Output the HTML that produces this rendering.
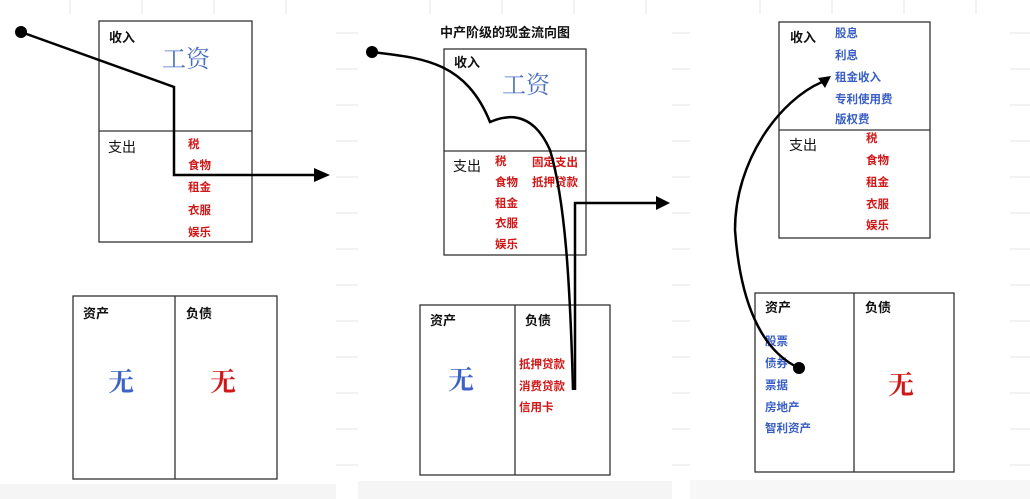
<!DOCTYPE html>
<html><head><meta charset="utf-8"><style>
html,body{margin:0;padding:0;background:#fff;}
body{width:1030px;height:499px;position:relative;overflow:hidden;font-family:"Liberation Sans","Noto Sans CJK SC",sans-serif;}
svg{position:absolute;left:0;top:0;}
</style></head><body>
<svg width="1030" height="499" viewBox="0 0 1030 499" font-family="'Noto Sans CJK SC','WenQuanYi Zen Hei',sans-serif">
<g stroke="#e4e4e4" stroke-width="1">
<line x1="70" y1="0" x2="70" y2="14"/><line x1="142" y1="0" x2="142" y2="14"/><line x1="214" y1="0" x2="214" y2="14"/><line x1="286" y1="0" x2="286" y2="14"/>
<line x1="430" y1="0" x2="430" y2="14"/><line x1="502" y1="0" x2="502" y2="14"/><line x1="574" y1="0" x2="574" y2="14"/><line x1="646" y1="0" x2="646" y2="14"/>
<line x1="760" y1="0" x2="760" y2="14"/><line x1="832" y1="0" x2="832" y2="14"/><line x1="904" y1="0" x2="904" y2="14"/><line x1="976" y1="0" x2="976" y2="14"/>
</g>
<g stroke="#e6e6e6">
<line x1="336" y1="33" x2="358" y2="33"/><line x1="336" y1="69" x2="358" y2="69"/><line x1="336" y1="105" x2="358" y2="105"/><line x1="336" y1="141" x2="358" y2="141"/><line x1="336" y1="177" x2="358" y2="177"/><line x1="336" y1="213" x2="358" y2="213"/><line x1="336" y1="249" x2="358" y2="249"/><line x1="336" y1="285" x2="358" y2="285"/><line x1="336" y1="321" x2="358" y2="321"/><line x1="336" y1="357" x2="358" y2="357"/><line x1="336" y1="393" x2="358" y2="393"/><line x1="336" y1="429" x2="358" y2="429"/><line x1="336" y1="465" x2="358" y2="465"/>
<line x1="672" y1="33" x2="690" y2="33"/><line x1="672" y1="69" x2="690" y2="69"/><line x1="672" y1="105" x2="690" y2="105"/><line x1="672" y1="141" x2="690" y2="141"/><line x1="672" y1="177" x2="690" y2="177"/><line x1="672" y1="213" x2="690" y2="213"/><line x1="672" y1="249" x2="690" y2="249"/><line x1="672" y1="285" x2="690" y2="285"/><line x1="672" y1="321" x2="690" y2="321"/><line x1="672" y1="357" x2="690" y2="357"/><line x1="672" y1="393" x2="690" y2="393"/><line x1="672" y1="429" x2="690" y2="429"/><line x1="672" y1="465" x2="690" y2="465"/>
<line x1="1010" y1="33" x2="1030" y2="33"/><line x1="1010" y1="69" x2="1030" y2="69"/><line x1="1010" y1="105" x2="1030" y2="105"/><line x1="1010" y1="141" x2="1030" y2="141"/><line x1="1010" y1="177" x2="1030" y2="177"/><line x1="1010" y1="213" x2="1030" y2="213"/><line x1="1010" y1="249" x2="1030" y2="249"/><line x1="1010" y1="285" x2="1030" y2="285"/><line x1="1010" y1="321" x2="1030" y2="321"/><line x1="1010" y1="357" x2="1030" y2="357"/><line x1="1010" y1="393" x2="1030" y2="393"/><line x1="1010" y1="429" x2="1030" y2="429"/><line x1="1010" y1="465" x2="1030" y2="465"/>
</g>
<rect x="0" y="484" width="336" height="15" fill="#f5f5f5"/>
<rect x="358" y="481" width="314" height="18" fill="#f5f5f5"/>
<rect x="690" y="480" width="340" height="19" fill="#f7f7f7"/>

<g fill="none" stroke="#333" stroke-width="1.3">
<rect x="99" y="21" width="153" height="221"/><line x1="99" y1="131" x2="252" y2="131"/>
<rect x="73" y="296" width="204" height="183"/><line x1="175" y1="296" x2="175" y2="479"/>
<rect x="444" y="49" width="142" height="206"/><line x1="444" y1="151" x2="586" y2="151"/>
<rect x="420" y="305" width="190" height="170"/><line x1="515" y1="305" x2="515" y2="475"/>
<rect x="779" y="22" width="151" height="216"/><line x1="779" y1="130" x2="930" y2="130"/>
<rect x="755" y="293" width="199" height="179"/><line x1="854" y1="293" x2="854" y2="472"/>
</g>

<g font-size="13" font-weight="bold" fill="#111">
<text x="109" y="42">收入</text><text x="108" y="152" font-weight="normal" font-size="14">支出</text>
<text x="83" y="318">资产</text><text x="186" y="318">负债</text>
<text x="440" y="37">中产阶级的现金流向图</text>
<text x="454" y="67">收入</text><text x="453" y="171" font-weight="normal" font-size="14">支出</text>
<text x="430" y="325">资产</text><text x="525" y="325">负债</text>
<text x="790" y="42">收入</text><text x="789" y="150" font-weight="normal" font-size="14">支出</text>
<text x="765" y="312">资产</text><text x="865" y="312">负债</text>
</g>
<g font-family="'Noto Serif CJK SC',serif" font-size="24">
<text x="162" y="67" fill="#4a6fc0">工资</text>
<text x="502" y="93" fill="#4a6fc0">工资</text>
<text x="108" y="391" fill="#3d64c4" font-size="26" font-weight="bold">无</text>
<text x="210" y="391" fill="#d01818" font-size="26" font-weight="bold">无</text>
<text x="448" y="389" fill="#3d64c4" font-size="26" font-weight="bold">无</text>
<text x="888" y="394" fill="#d01818" font-size="26" font-weight="bold">无</text>
</g>
<g font-size="11.5" font-weight="bold" fill="#d01818">
<text x="188" y="148">税</text><text x="188" y="169">食物</text><text x="188" y="191">租金</text><text x="188" y="214">衣服</text><text x="188" y="236">娱乐</text>
<text x="495" y="165">税</text><text x="495" y="186">食物</text><text x="495" y="207">租金</text><text x="495" y="227">衣服</text><text x="495" y="248">娱乐</text>
<text x="532" y="166">固定支出</text><text x="532" y="186">抵押贷款</text>
<text x="519" y="368">抵押贷款</text><text x="519" y="390">消费贷款</text><text x="519" y="411">信用卡</text>
<text x="866" y="142">税</text><text x="866" y="164">食物</text><text x="866" y="186">租金</text><text x="866" y="208">衣服</text><text x="866" y="229">娱乐</text>
</g>
<g font-size="11.5" font-weight="bold" fill="#3a5fc4">
<text x="835" y="37">股息</text><text x="835" y="59">利息</text><text x="835" y="81">租金收入</text><text x="835" y="103">专利使用费</text><text x="835" y="123">版权费</text>
<text x="765" y="345">股票</text><text x="765" y="367">债券</text><text x="765" y="389">票据</text><text x="765" y="411">房地产</text><text x="765" y="432">智利资产</text>
</g>

<g fill="none" stroke="#000" stroke-width="2.5">
<polyline points="21,32 174,87 174,175 318,175"/>
<path d="M372,52 C420,58 465,60 490,122 C500,118 530,105 550,150 C565,200 570,280 573,390"/>
<polyline points="575,390 575,203 658,203"/>
<path d="M799,368 C760,350 740,300 735,230 C735,160 780,100 822,82"/>
</g>
<g fill="#000">
<circle cx="21" cy="32" r="6"/>
<polygon points="314,168 330,175 314,182"/>
<circle cx="372" cy="52" r="6"/>
<polygon points="656,196 670,203 656,210"/>
<circle cx="799" cy="368" r="6"/>
<polygon points="831,76 818,78 825,88"/>
</g>
</svg>
</body></html>
